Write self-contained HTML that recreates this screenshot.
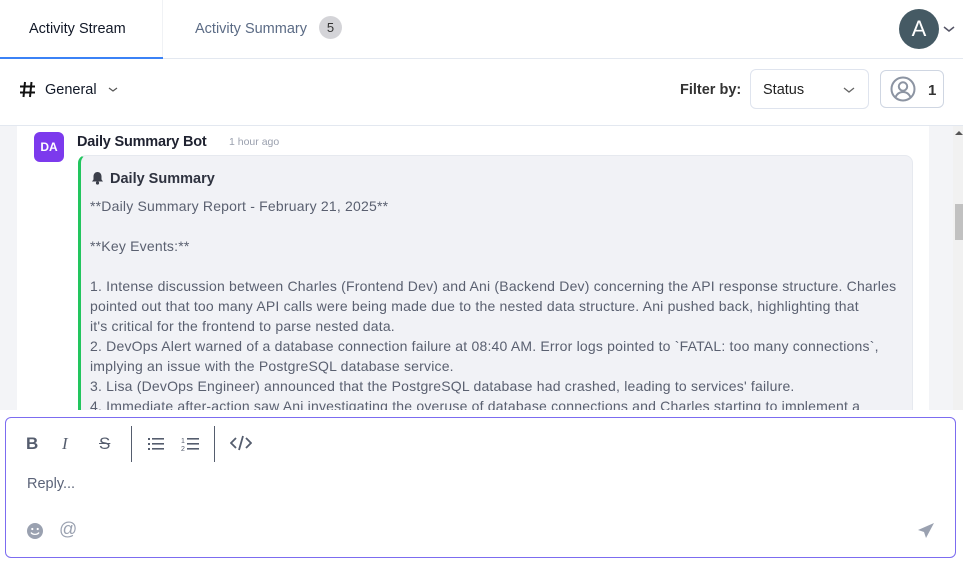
<!DOCTYPE html>
<html><head><meta charset="utf-8"><style>
*{box-sizing:border-box;margin:0;padding:0}
body{width:963px;height:564px;overflow:hidden;background:#fff;font-family:"Liberation Sans",sans-serif;position:relative;color:#1f2937}
.abs{position:absolute}
</style></head><body>
<div class="abs" style="left:0;top:0;width:963px;height:59px;border-bottom:1px solid #e3e8f0"></div>
<div class="abs" style="left:0;top:0;width:163px;height:59px;border-right:1px solid #f0f2f5"></div>
<div class="abs" style="left:0;top:57px;width:163px;height:2px;background:#3b82f6"></div>
<div class="abs" style="left:29px;top:21px;font-size:14.5px;color:#111827">Activity Stream</div>
<div class="abs" style="left:195px;top:21px;font-size:14.5px;color:#5b6b85">Activity Summary</div>
<div class="abs" style="left:319px;top:16px;width:23px;height:23px;border-radius:50%;background:#d4d4d8;font-size:13px;color:#333;text-align:center;line-height:23px">5</div>
<div class="abs" style="left:899px;top:9px;width:40px;height:40px;border-radius:50%;background:#455a64;color:#fff;font-size:22px;text-align:center;line-height:40px">A</div>
<svg class="abs" style="left:942px;top:24px" width="14" height="10"><path d="M2 3l5 4 5-4" fill="none" stroke="#556" stroke-width="1.5"/></svg>
<div class="abs" style="left:0;top:125px;width:963px;height:1px;background:#e3e8f0"></div>
<svg class="abs" style="left:19px;top:81px" width="17" height="17"><path d="M6 1L4.5 16M12.5 1L11 16M1 5.5h15M1 11.5h15" fill="none" stroke="#111" stroke-width="2"/></svg>
<div class="abs" style="left:45px;top:82px;font-size:14.5px;color:#111827">General</div>
<svg class="abs" style="left:108px;top:86px" width="10" height="8"><path d="M1 2l4 3 4-3" fill="none" stroke="#555" stroke-width="1.2"/></svg>
<div class="abs" style="left:680px;top:82px;font-size:14.5px;font-weight:bold;color:#333">Filter by:</div>
<div class="abs" style="left:750px;top:69px;width:119px;height:40px;border:1px solid #dfe4ee;border-radius:6px"></div>
<div class="abs" style="left:763px;top:82px;font-size:14.5px;color:#222">Status</div>
<svg class="abs" style="left:843px;top:86px" width="12" height="8"><path d="M1 2l5 4 5-4" fill="none" stroke="#666" stroke-width="1.3"/></svg>
<div class="abs" style="left:880px;top:70px;width:64px;height:38px;border:1px solid #cfd6e2;border-radius:6px"></div>
<svg class="abs" style="left:890px;top:76px" width="26" height="26" viewBox="0 0 26 26"><circle cx="13" cy="13" r="11.5" fill="none" stroke="#8c94a2" stroke-width="2"/><circle cx="13" cy="10.5" r="4.2" fill="none" stroke="#8c94a2" stroke-width="2"/><path d="M5.5 21c2-4 4.5-5 7.5-5s5.5 1 7.5 5" fill="none" stroke="#8c94a2" stroke-width="2"/></svg>
<div class="abs" style="left:928px;top:82px;font-size:15px;font-weight:bold;color:#333">1</div>
<div class="abs" style="left:0;top:126px;width:17px;height:284px;background:#f3f4f7"></div>
<div class="abs" style="left:929px;top:126px;width:24px;height:284px;background:#f3f4f7"></div>
<div class="abs" style="left:953px;top:126px;width:10px;height:284px;background:#f1f1f1"></div>
<div class="abs" style="left:955px;top:204px;width:8px;height:36px;background:#c1c1c1"></div>
<svg class="abs" style="left:955px;top:131px" width="8" height="5"><path d="M0 4l4-4 4 4z" fill="#555"/></svg>
<div class="abs" style="left:34px;top:132px;width:30px;height:30px;border-radius:6px;background:#7c3aed;color:#fff;font-size:12px;font-weight:bold;text-align:center;line-height:30px">DA</div>
<div class="abs" style="left:77px;top:134px;font-size:14.5px;font-weight:bold;color:#1f2230;letter-spacing:-0.2px">Daily Summary Bot</div>
<div class="abs" style="left:229px;top:136px;font-size:10.5px;color:#9aa0ae">1 hour ago</div>
<div class="abs" style="left:78px;top:155px;width:835px;height:270px;background:#f1f2f6;border:1px solid #e6e9ef;border-left:3px solid #22c55e;border-radius:8px;overflow:hidden"></div>
<svg class="abs" style="left:91px;top:171px" width="13" height="14" viewBox="0 0 13 14"><path d="M6.5 1c-2.5 0-4 2-4 4.5v3L1 10.5h11L10.5 8.5v-3C10.5 3 9 1 6.5 1z" fill="#3b3f4a"/><circle cx="6.5" cy="12" r="1.6" fill="#3b3f4a"/></svg>
<div class="abs" style="left:110px;top:171px;font-size:14.5px;font-weight:bold;color:#2f3340">Daily Summary</div>
<div class="abs" style="left:90px;top:196px;font-size:14px;line-height:20px;color:#5a6070;white-space:nowrap;letter-spacing:0.2px;height:214px;overflow:hidden">**Daily Summary Report - February 21, 2025**<br><br>**Key Events:**<br><br>1. Intense discussion between Charles (Frontend Dev) and Ani (Backend Dev) concerning the API response structure. Charles<br>pointed out that too many API calls were being made due to the nested data structure. Ani pushed back, highlighting that<br>it's critical for the frontend to parse nested data.<br>2. DevOps Alert warned of a database connection failure at 08:40 AM. Error logs pointed to `FATAL: too many connections`,<br>implying an issue with the PostgreSQL database service.<br>3. Lisa (DevOps Engineer) announced that the PostgreSQL database had crashed, leading to services' failure.<br>4. Immediate after-action saw Ani investigating the overuse of database connections and Charles starting to implement a</div>
<div class="abs" style="left:0;top:410px;width:963px;height:154px;background:#fff"></div>
<div class="abs" style="left:5px;top:417px;width:951px;height:141px;border:1px solid #7c6cf0;border-radius:6px"></div>
<div class="abs" style="left:26px;top:434px;font-size:17px;font-weight:bold;color:#555d6e">B</div>
<div class="abs" style="left:62px;top:434px;font-size:17px;font-style:italic;color:#555d6e;font-family:'Liberation Serif',serif">I</div>
<div class="abs" style="left:99px;top:434px;font-size:17px;text-decoration:line-through;color:#555d6e">S</div>
<div class="abs" style="left:131px;top:426px;width:1px;height:36px;background:#555d6e"></div>
<svg class="abs" style="left:148px;top:437px" width="16" height="14"><g fill="#555d6e"><rect x="0" y="1" width="2" height="2"/><rect x="0" y="6" width="2" height="2"/><rect x="0" y="11" width="2" height="2"/><rect x="4" y="1" width="12" height="1.6"/><rect x="4" y="6" width="12" height="1.6"/><rect x="4" y="11" width="12" height="1.6"/></g></svg>
<svg class="abs" style="left:181px;top:436px" width="18" height="16"><text x="0" y="7" font-size="7" fill="#555d6e" font-family="Liberation Sans">1</text><text x="0" y="15" font-size="7" fill="#555d6e" font-family="Liberation Sans">2</text><g fill="#555d6e"><rect x="6" y="2" width="12" height="1.6"/><rect x="6" y="7" width="12" height="1.6"/><rect x="6" y="12" width="12" height="1.6"/></g></svg>
<div class="abs" style="left:214px;top:426px;width:1px;height:36px;background:#555d6e"></div>
<svg class="abs" style="left:230px;top:435px" width="22" height="16"><path d="M6 3L1 8l5 5M16 3l5 5-5 5M13 1L9 15" fill="none" stroke="#555d6e" stroke-width="1.8"/></svg>
<div class="abs" style="left:27px;top:476px;font-size:14.5px;color:#5b6378">Reply...</div>
<svg class="abs" style="left:26px;top:522px" width="18" height="18"><circle cx="9" cy="9" r="8" fill="#9aa1b0"/><circle cx="6.3" cy="7" r="1.1" fill="#fff"/><circle cx="11.7" cy="7" r="1.1" fill="#fff"/><path d="M5 10.5c1.5 2.5 6.5 2.5 8 0" fill="none" stroke="#fff" stroke-width="1.3"/></svg>
<div class="abs" style="left:59px;top:519px;font-size:18px;color:#9aa1b0">@</div>
<svg class="abs" style="left:917px;top:522px" width="18" height="17"><path d="M17 1L1 8l6 2 2 6z" fill="#9aa1b0"/></svg>
</body></html>
